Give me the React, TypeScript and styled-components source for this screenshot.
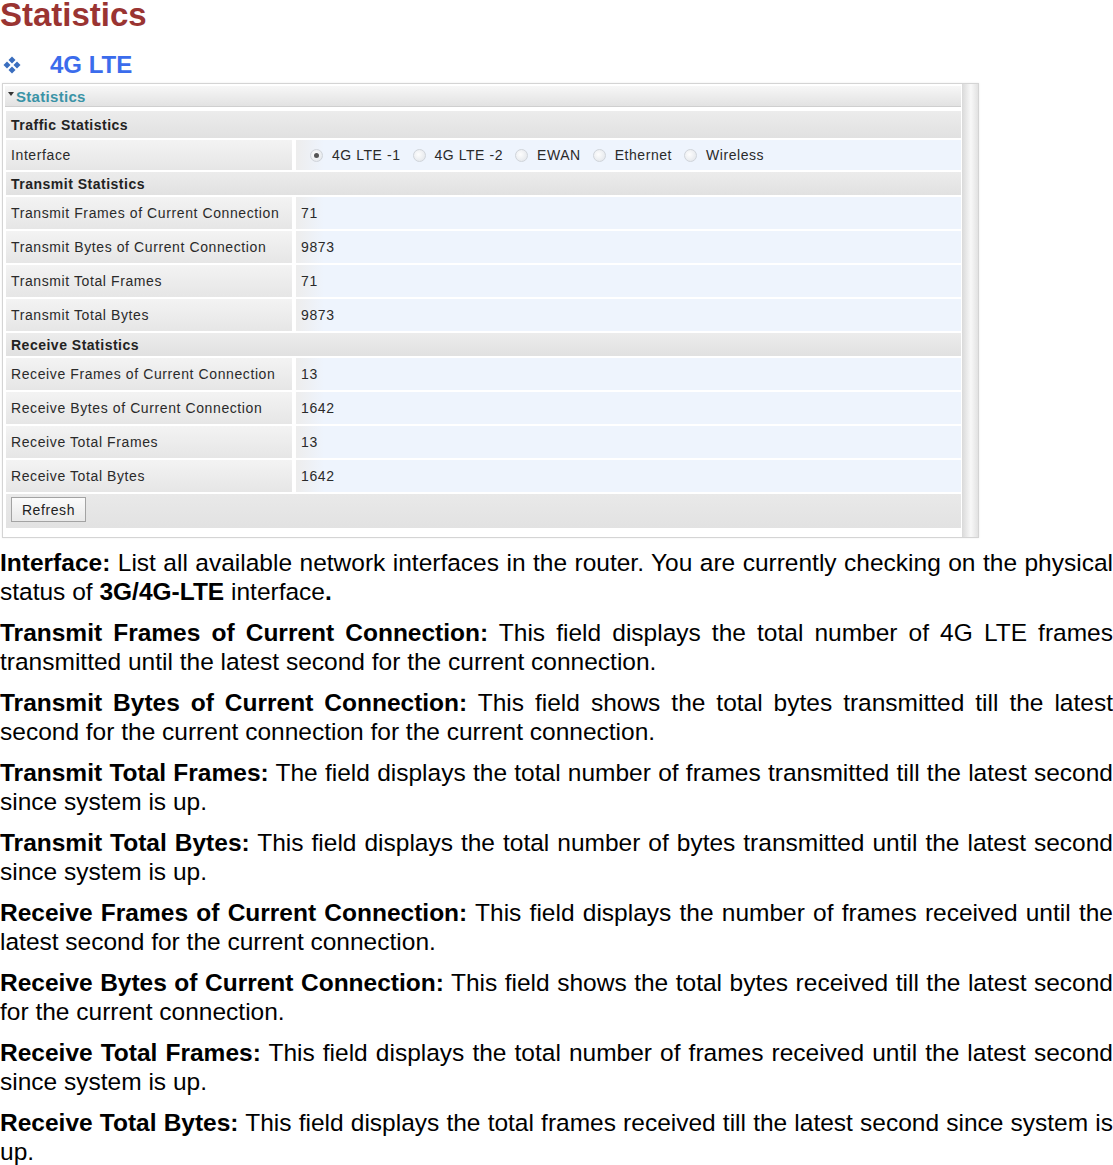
import React from 'react';
import styled, { createGlobalStyle } from 'styled-components';

const GlobalStyle = createGlobalStyle`
  html, body {
    margin: 0;
    padding: 0;
    background: #ffffff;
    overflow: hidden;
  }
  body {
    font-family: "Liberation Sans", Arial, sans-serif;
    color: #000;
  }
`;

const Page = styled.div`
  width: 1113px;
`;

const Title = styled.h1`
  margin: -1px 0 0 0;
  font-size: 33px;
  line-height: 32px;
  font-weight: bold;
  color: #9a3432;
`;

const SubHeading = styled.div`
  display: flex;
  align-items: center;
  height: 29px;
  margin-top: 19px;
  padding-left: 3px;
  gap: 29px;
  font-size: 24px;
  font-weight: bold;
  color: #3b6cec;
`;

const Panel = styled.div`
  display: flex;
  width: 975px;
  margin: 4px 0 0 2px;
  border: 1px solid #d4d4d4;
  background: #fff;
  box-shadow: 0 0 2px rgba(0, 0, 0, 0.08);
`;

const PanelMain = styled.div`
  flex: 1;
  display: flex;
  flex-direction: column;
  padding: 2px 1px 9px 2px;
  font-size: 14px;
  letter-spacing: 0.6px;
  color: #2a2a2a;
`;

const ScrollStrip = styled.div`
  width: 16px;
  background: linear-gradient(to right, #d9d9d9, #f8f8f8 55%, #e2e2e2);
`;

const TitleBar = styled.div`
  display: flex;
  align-items: center;
  height: 20px;
  padding-left: 3px;
  margin-bottom: 4px;
  background: linear-gradient(#f7f7f7, #e2e2e2);
  border-bottom: 1px solid #cfcfcf;
  font-size: 15px;
  font-weight: bold;
  letter-spacing: 0.3px;
  color: #3a93a6;
`;

const Caret = styled.span`
  width: 0;
  height: 0;
  margin: -5px 2px 0 0;
  border-left: 3px solid transparent;
  border-right: 3px solid transparent;
  border-top: 4px solid #333;
`;

const Rows = styled.div`
  display: flex;
  flex-direction: column;
  gap: 2px;
  padding-left: 1px;
`;

const SectionRow = styled.div<{ $h: number }>`
  display: flex;
  align-items: center;
  height: ${(p) => p.$h}px;
  padding-left: 5px;
  background: linear-gradient(#ececec, #e1e1e1);
  font-weight: bold;
  letter-spacing: 0.5px;
  color: #222;
`;

const Row = styled.div<{ $h: number }>`
  display: flex;
  gap: 4px;
  height: ${(p) => p.$h}px;
`;

const LabelCell = styled.div`
  display: flex;
  align-items: center;
  width: 281px;
  padding-left: 5px;
  background: linear-gradient(#f3f3f3, #e6e6e6);
`;

const ValueCell = styled.div`
  flex: 1;
  display: flex;
  align-items: center;
  padding-left: 5px;
  background: linear-gradient(to right, #ededed, #eef4fd 28px);
`;

const RadioGroup = styled.div`
  display: flex;
  align-items: center;
  gap: 12px;
  padding-left: 9px;
  letter-spacing: 0.55px;
`;

const RadioOption = styled.label`
  display: flex;
  align-items: center;
  gap: 9px;
`;

const RadioDot = styled.span<{ $checked?: boolean }>`
  position: relative;
  width: 11px;
  height: 11px;
  border-radius: 50%;
  border: 1px solid #d0d4da;
  background: radial-gradient(circle at 40% 40%, #fdfdfd, #dfe3e8);

  &::after {
    content: '';
    display: ${(p) => (p.$checked ? 'block' : 'none')};
    position: absolute;
    left: 3px;
    top: 3px;
    width: 5px;
    height: 5px;
    border-radius: 50%;
    background: #555;
  }
`;

const ButtonRow = styled.div`
  display: flex;
  align-items: flex-start;
  height: 34px;
  padding: 3px 0 0 5px;
  box-sizing: border-box;
  background: linear-gradient(#e9e9e9, #e2e2e2);
`;

const Button = styled.button`
  height: 25px;
  width: 75px;
  padding: 0;
  border: 1px solid #a3a3a3;
  background: linear-gradient(#fbfbfb, #e9e9e9);
  font-family: "Liberation Sans", Arial, sans-serif;
  font-size: 14px;
  letter-spacing: 0.6px;
  color: #222;
`;

const Description = styled.div`
  margin-top: 10px;
  font-size: 24.5px;
  line-height: 29px;
  text-align: justify;
`;

const Para = styled.p`
  margin: 0 0 12px 0;

  b {
    font-weight: bold;
  }
`;

const DiamondIcon = () => (
  <svg width="18" height="18" viewBox="0 0 18 18">
    <g fill="#3a6ebf">
      <path d="M9 0.5 L12.5 4 L9 7.5 L5.5 4 Z" />
      <path d="M4 5.5 L7.5 9 L4 12.5 L0.5 9 Z" />
      <path d="M14 5.5 L17.5 9 L14 12.5 L10.5 9 Z" />
      <path d="M9 10.5 L12.5 14 L9 17.5 L5.5 14 Z" />
    </g>
  </svg>
);

const interfaces = ['4G LTE -1', '4G LTE -2', 'EWAN', 'Ethernet', 'Wireless'];

const transmit = [
  ['Transmit Frames of Current Connection', '71'],
  ['Transmit Bytes of Current Connection', '9873'],
  ['Transmit Total Frames', '71'],
  ['Transmit Total Bytes', '9873'],
];

const receive = [
  ['Receive Frames of Current Connection', '13'],
  ['Receive Bytes of Current Connection', '1642'],
  ['Receive Total Frames', '13'],
  ['Receive Total Bytes', '1642'],
];

const StatRow = ({ label, value }: { label: string; value: string }) => (
  <Row $h={32}>
    <LabelCell>{label}</LabelCell>
    <ValueCell>{value}</ValueCell>
  </Row>
);

const App = () => {
  return (
    <Page>
      <GlobalStyle />
      <Title>Statistics</Title>
      <SubHeading>
        <DiamondIcon />
        <span>4G LTE</span>
      </SubHeading>

      <Panel>
        <PanelMain>
          <TitleBar>
            <Caret />
            Statistics
          </TitleBar>
          <Rows>
            <SectionRow $h={27}>Traffic Statistics</SectionRow>
            <Row $h={30}>
              <LabelCell>Interface</LabelCell>
              <ValueCell>
                <RadioGroup>
                  {interfaces.map((name, i) => (
                    <RadioOption key={name}>
                      <RadioDot $checked={i === 0} />
                      {name}
                    </RadioOption>
                  ))}
                </RadioGroup>
              </ValueCell>
            </Row>
            <SectionRow $h={23}>Transmit Statistics</SectionRow>
            {transmit.map(([label, value]) => (
              <StatRow key={label} label={label} value={value} />
            ))}
            <SectionRow $h={23}>Receive Statistics</SectionRow>
            {receive.map(([label, value]) => (
              <StatRow key={label} label={label} value={value} />
            ))}
            <ButtonRow>
              <Button>Refresh</Button>
            </ButtonRow>
          </Rows>
        </PanelMain>
        <ScrollStrip />
      </Panel>

      <Description>
        <Para>
          <b>Interface:</b> List all available network interfaces in the router. You are currently
          checking on the physical status of <b>3G/4G-LTE</b> interface<b>.</b>
        </Para>
        <Para>
          <b>Transmit Frames of Current Connection:</b> This field displays the total number of 4G
          LTE frames transmitted until the latest second for the current connection.
        </Para>
        <Para>
          <b>Transmit Bytes of Current Connection:</b> This field shows the total bytes transmitted
          till the latest second for the current connection for the current connection.
        </Para>
        <Para>
          <b>Transmit Total Frames:</b> The field displays the total number of frames transmitted
          till the latest second since system is up.
        </Para>
        <Para>
          <b>Transmit Total Bytes:</b> This field displays the total number of bytes transmitted
          until the latest second since system is up.
        </Para>
        <Para>
          <b>Receive Frames of Current Connection:</b> This field displays the number of frames
          received until the latest second for the current connection.
        </Para>
        <Para>
          <b>Receive Bytes of Current Connection:</b> This field shows the total bytes received till
          the latest second for the current connection.
        </Para>
        <Para>
          <b>Receive Total Frames:</b> This field displays the total number of frames received until
          the latest second since system is up.
        </Para>
        <Para>
          <b>Receive Total Bytes:</b> This field displays the total frames received till the latest
          second since system is up.
        </Para>
      </Description>
    </Page>
  );
};

export default App;
